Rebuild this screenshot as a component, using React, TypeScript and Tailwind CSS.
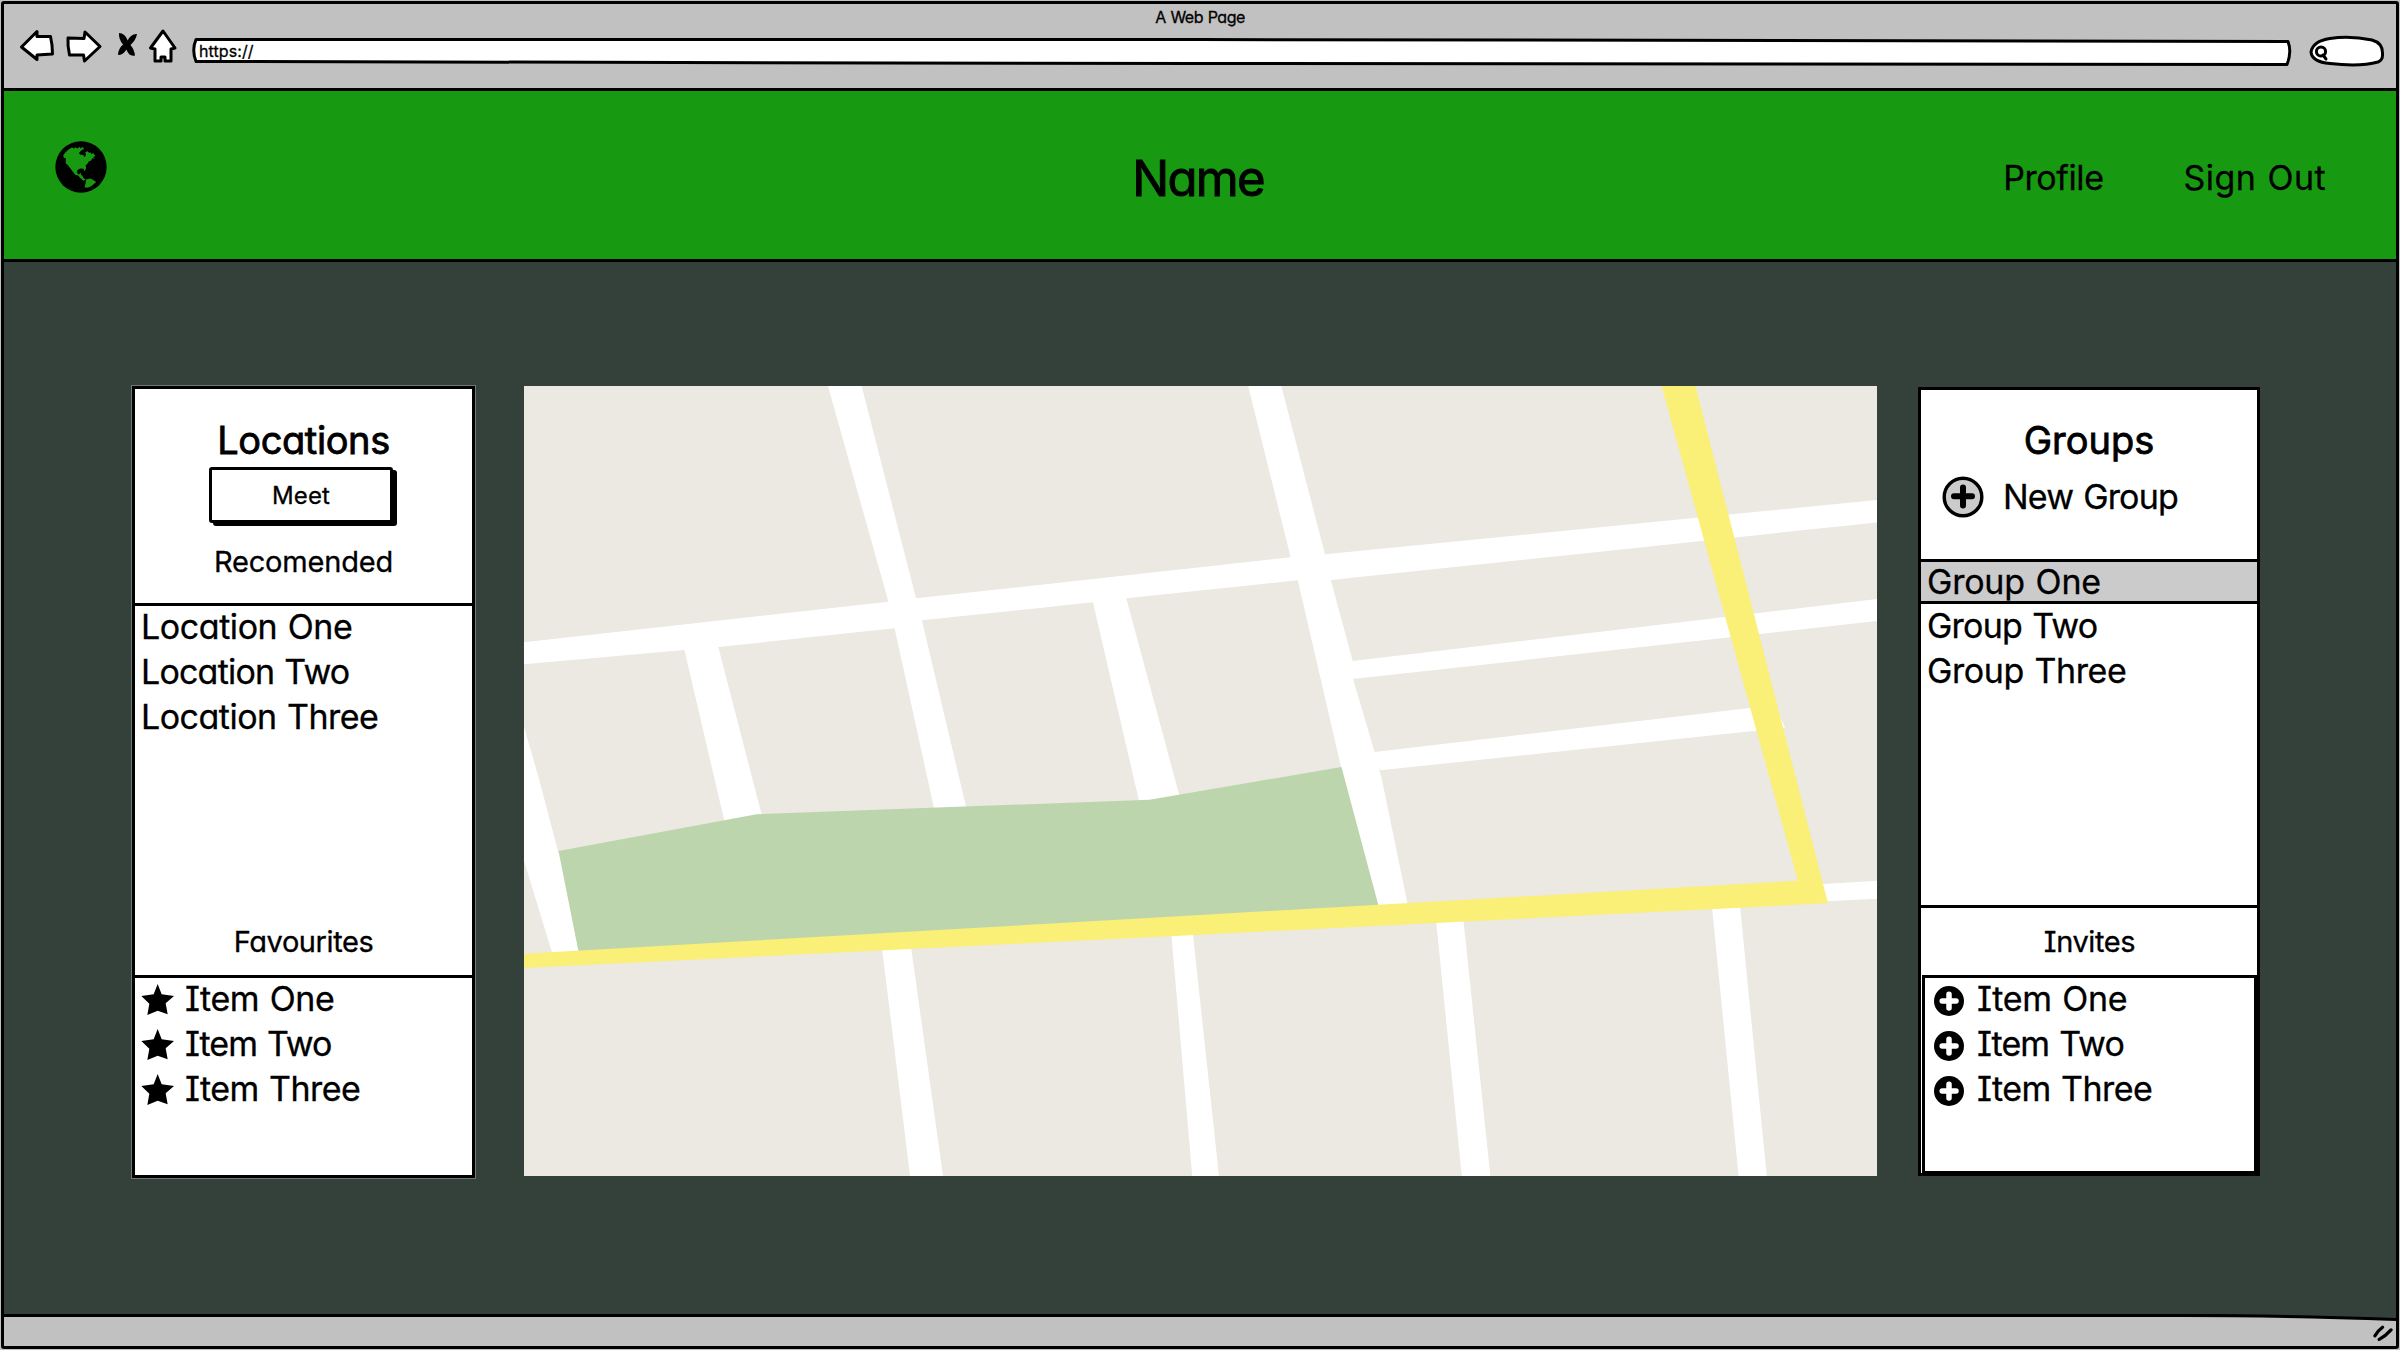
import { useLayoutEffect, useRef, useState } from "react";
import type { ReactNode } from "react";

/** Text whose tracking is adjusted so that the line takes up a given width. */
function Fit({ width, className = "", children }: { width: number; className?: string; children: string }) {
  const ref = useRef<HTMLSpanElement>(null);
  const [tracking, setTracking] = useState(0);
  useLayoutEffect(() => {
    const el = ref.current;
    if (!el) return;
    const size = parseFloat(getComputedStyle(el).fontSize);
    const natural = el.getBoundingClientRect().width - tracking * children.length;
    setTracking((width + size * 0.07 - natural) / children.length);
  }, [width, children]);
  return (
    <span
      ref={ref}
      className={`inline-block whitespace-pre [word-spacing:0.04em] ${className}`}
      style={{ letterSpacing: `${tracking}px` }}
    >
      {children}
    </span>
  );
}

const outline = { stroke: "#000", strokeWidth: 3, strokeLinejoin: "round" as const, strokeLinecap: "round" as const };

function NavIcons() {
  return (
    <svg className="block h-[40px] w-[170px]" viewBox="15 26 170 40">
      <g fill="#fff" {...outline}>
        <path d="M21.5 47 37 31.5 37 36.500 50.500 36.500 Q52.500 45 52.500 54 L37 55 37 59.500Z" />
        <path d="M100 46.500 85 32 84 38.500 68 38 Q67.500 46 69.500 55 L83.500 55 84.500 61Z" />
        <path d="M163 31 150.500 48 155 49 155 61 161 61 161 57 165 57 165 61 171 61 171 49 175 48Z" />
      </g>
      <path d="M119 33Q125 33 127.700 40.500Q131 33.500 137 34Q136 40 130.500 45Q134.500 50 135 55.500Q129 57 126.500 49.500Q123 55 118 55Q118 49 123 44.500Q118.500 39 119 33Z" />
    </svg>
  );
}

function Globe() {
  return (
    <svg className="block size-[52px]" viewBox="164 421 157 157">
      <circle cx="242.500" cy="499.500" r="77.500" />
      <g fill="#179a11">
        <path d="M189 463 196 455 205 447 215 441 222 444 226 440 232 444 238 438 241 444 247 439 252 445 245 448 236 457 240 462 250 464 254 470 258 461 255 455 262 452 268 457 272 455 273 460 280 458 286 466 279 469 284 474 276 474 274 479 265 484 262 490 256 495 258 502 254 513 250 505 240 504 231 509 231 518 236 522 243 516 242 523 247 526 249 532 257 538 250 541 240 533 234 525 226 524 219 515 210 503 202 493 196 488 197 474 190 471Z" />
        <path d="M258 537 270 534 278 538 284 542 288 545 280 552 270 559 262 562 253 561 256 550Z" />
      </g>
    </svg>
  );
}

function Star() {
  return (
    <svg className="block h-[31px] w-[33px] shrink-0" viewBox="93 314 99 93">
      <path d="M143 314 155 345 192 350 167 372 173 405 143 394 112 407 118 373 94 350 131 345Z" />
    </svg>
  );
}

function PlusDot() {
  return (
    <svg className="block size-[30px] shrink-0" viewBox="0 0 30 30">
      <circle cx="15" cy="15" r="15" />
      <path d="M15 8.300V22M8.200 15H22" stroke="#fff" strokeWidth="5.500" strokeLinecap="round" />
    </svg>
  );
}

function AddButtonIcon() {
  return (
    <svg className="block size-[42px] shrink-0" viewBox="0 0 42 42">
      <circle cx="21" cy="21" r="18.800" fill="#cbcbcb" stroke="#000" strokeWidth="3.400" />
      <path d="M21 11.500V29.500M12 20.300H30" stroke="#000" strokeWidth="6" strokeLinecap="round" />
    </svg>
  );
}

const blocks = [
  "524,386 828,386 888.4,601.7 524,642.3",
  "861.6,386 1248.2,386 1290.6,557.3 1200,567.3 916,598.3",
  "1281.3,386 1878,386 1878,500 1325,554.3",
  "524,664.3 684.4,650 724.6,822 558.5,853 539.3,780 524,726.7",
  "718.3,647 894.6,628.3 930,790 934.4,810 762,816",
  "921.9,620.3 1092.9,602.3 1139.3,802 966.5,808.7",
  "1126.3,598.3 1297.8,580.3 1341.5,769 1179.5,796",
  "1330.8,580 1878,522.3 1878,599 1352.7,661",
  "1353,679 1878,621 1878,880.7 1823,884 1800,884 1407.6,904 1382,780 1374.6,752",
  "524,860.7 552.2,953 524,955",
  "524,966 882.1,949 910.3,1178 524,1178",
  "911.2,948 1171.4,935 1192.4,1178 943.3,1178",
  "1192.9,934 1436.2,922 1462,1178 1219.2,1178",
  "1463.4,920 1712,907 1738.8,1178 1490.6,1178",
  "1740,906 1826,901.300 1878,898.700 1878,1178 1767,1178",
];

function CityMap() {
  return (
    <svg className="block h-[790px] w-[1353px] shrink-0 bg-white" viewBox="524 386 1353 790">
      {blocks.map((points) => (
        <polygon key={points} points={points} fill="#ece9e2" />
      ))}
      <polygon points="1370,752.5 1750,708 1775,705 1785,728 1755.800,730.700 1380.400,770.300" fill="#fff" />
      <polygon points="558.5,851 756.7,814.3 1149.5,799.7 1341.5,767 1378.600,906 578.600,952" fill="#bcd5ad" />
      <polygon points="524,953.700 1200,915 1797.800,880.700 1661.600,386 1695.500,386 1828,903.300 1200,934.700 524,968" fill="#faef77" />
    </svg>
  );
}

function Row({ width, children, icon }: { width: number; children: string; icon?: ReactNode }) {
  return (
    <li className="flex h-[45px] items-center">
      {icon}
      <Fit width={width} className="text-[34px]">{children}</Fit>
    </li>
  );
}

function LocationsPanel() {
  const star = <span className="mr-[11px] mt-[1px]"><Star /></span>;
  return (
    <section className="flex h-[792px] w-[343px] shrink-0 flex-col border-[3px] border-black bg-white outline outline-1 outline-white/30">
      <div className="flex h-[214px] shrink-0 flex-col items-center">
        <h2 className="mt-[27px] flex h-[48px] items-center">
          <Fit width={170} className="text-[38px] [-webkit-text-stroke:0.8px_black]">Locations</Fit>
        </h2>
        <button className="-ml-[5px] mt-[3px] flex h-[56px] w-[184px] items-center justify-center rounded-[3px] border-[3px] border-black bg-white pt-[2px] shadow-[4px_3px_0_#000]">
          <Fit width={56.5} className="text-[24px]">Meet</Fit>
        </button>
        <h3 className="mt-[19px] flex h-[40px] items-center">
          <Fit width={177} className="text-[29px]">Recomended</Fit>
        </h3>
      </div>
      <div className="flex h-[372px] shrink-0 flex-col justify-between border-t-[3px] border-black">
        <ul className="-mt-[2px] pl-[6px]">
          <Row width={209}>Location One</Row>
          <Row width={206}>Location Two</Row>
          <Row width={235}>Location Three</Row>
        </ul>
        <h3 className="mb-[13px] flex h-[40px] items-center justify-center">
          <Fit width={137.5} className="text-[29px]">Favourites</Fit>
        </h3>
      </div>
      <div className="flex-1 border-t-[3px] border-black">
        <ul className="-mt-[2px] pl-[6px]">
          <Row width={147} icon={star}>Item One</Row>
          <Row width={144} icon={star}>Item Two</Row>
          <Row width={173} icon={star}>Item Three</Row>
        </ul>
      </div>
    </section>
  );
}

function GroupsPanel() {
  const dot = <span className="mr-[13px] mt-[4px]"><PlusDot /></span>;
  return (
    <section className="flex h-[789px] w-[342px] shrink-0 flex-col border-[3px] border-black bg-white">
      <div className="flex h-[169px] shrink-0 flex-col">
        <h2 className="mt-[26px] flex h-[48px] items-center justify-center">
          <Fit width={128} className="text-[38px] [-webkit-text-stroke:0.8px_black]">Groups</Fit>
        </h2>
        <div className="mt-[11px] flex h-[44px] items-center pl-[21px]">
          <AddButtonIcon />
          <Fit width={172.5} className="-mt-[2px] ml-[19px] text-[34px]">New Group</Fit>
        </div>
      </div>
      <div className="h-[349px] shrink-0 border-y-[3px] border-black">
        <div className="flex h-[42px] items-center border-b-[3px] border-black bg-[#cbcbcb] pl-[6px]">
          <Fit width={171.5} className="text-[34px]">Group One</Fit>
        </div>
        <ul className="-mt-[1px] pl-[6px]">
          <Row width={168}>Group Two</Row>
          <Row width={197}>Group Three</Row>
        </ul>
      </div>
      <h3 className="flex h-[67px] shrink-0 items-center justify-center pl-[1px]">
        <Fit width={89.5} className="text-[29px]">Invites</Fit>
      </h3>
      <div className="-mb-[1px] flex-1 pl-[1px]">
        <div className="h-full border-[3px] border-black">
          <ul className="-mt-[2px] pl-[9px]">
            <Row width={148} icon={dot}>Item One</Row>
            <Row width={144.500} icon={dot}>Item Two</Row>
            <Row width={173} icon={dot}>Item Three</Row>
          </ul>
        </div>
      </div>
    </section>
  );
}

export default function App() {
  return (
    <div className="h-[1350px] w-[2400px] overflow-hidden bg-[#c1c1c1] px-px py-px font-['Inter',sans-serif] text-black [-webkit-text-stroke:0.3px_black] [font-feature-settings:'cv11','cv08']">
      <div className="flex h-[1348px] w-[2398px] flex-col rounded-[3px] border-[3px] border-black">
        <header className="flex h-[84px] shrink-0 flex-col">
          <div className="flex h-[27px] items-center justify-center pb-[2px]">
            <Fit width={88.500} className="text-[16px]">A Web Page</Fit>
          </div>
          <div className="flex h-[40px] items-center pl-[11px]">
            <div className="-mt-[11px]"><NavIcons /></div>
            <div className="relative ml-[7px] flex h-[30px] w-[2100px] items-center pl-[7px]">
              <svg className="absolute inset-0 h-full w-full" viewBox="192 36 2100 30">
                <path d="M196 39.500 1200 39.500 2288 41.500Q2292 52 2287 64.500L1200 63.500 196 61.500Q191.500 50 196 39.500Z" fill="#fff" {...outline} />
              </svg>
              <Fit width={53.500} className="relative text-[16px]">https://</Fit>
            </div>
            <svg className="ml-[16px] block h-[34px] w-[78px]" viewBox="2308 34 78 34">
              <path d="M2311 52Q2313 41 2330 38.500Q2350 35.500 2372 40Q2383 43 2382.500 54Q2383 60 2378 62Q2360 67 2330 63.500Q2312 62 2311 52Z" fill="#fff" {...outline} />
              <circle cx="2321" cy="51.500" r="4.600" fill="none" stroke="#000" strokeWidth="3" />
              <path d="M2323 55 2326 59" {...outline} />
            </svg>
          </div>
        </header>

        <nav className="grid h-[174px] shrink-0 grid-cols-3 items-center border-y-[3px] border-black bg-[#179a11]">
          <div className="-mt-[17px] pl-[51px]"><Globe /></div>
          <h1 className="flex justify-center pr-[4px] pt-[8px]">
            <Fit width={128} className="text-[49px] [-webkit-text-stroke:1px_black]">Name</Fit>
          </h1>
          <div className="flex justify-end pr-[70px] pt-[4px]">
            <Fit width={98} className="mr-[80px] text-[34px]">Profile</Fit>
            <Fit width={140} className="text-[34px]">Sign Out</Fit>
          </div>
        </nav>

        <main className="flex flex-1 items-start bg-[#34403a] pl-[128px] pt-[124px]">
          <LocationsPanel />
          <div className="ml-[49px]"><CityMap /></div>
          <div className="ml-[41px] pt-px"><GroupsPanel /></div>
        </main>

        <footer className="relative flex h-[32px] shrink-0 items-center justify-end border-t-[3px] border-black pr-[3px]">
          <svg className="absolute right-0 -top-[3px] h-[8px] w-[210px]" viewBox="0 0 210 8">
            <path d="M0 0H210V5Q100 1 0 0Z" fill="#34403a" />
            <path d="M0 1.500Q90 1.500 210 5.500" fill="none" stroke="#000" strokeWidth="3" />
          </svg>
          <svg className="mt-[4px] block h-[17px] w-[20px]" viewBox="518 228 61 50">
            <path d="M524 260Q532 245 547 234M537 271Q555 262 573 242" fill="none" stroke="#000" strokeWidth="10" strokeLinecap="round" />
          </svg>
        </footer>
      </div>
    </div>
  );
}
